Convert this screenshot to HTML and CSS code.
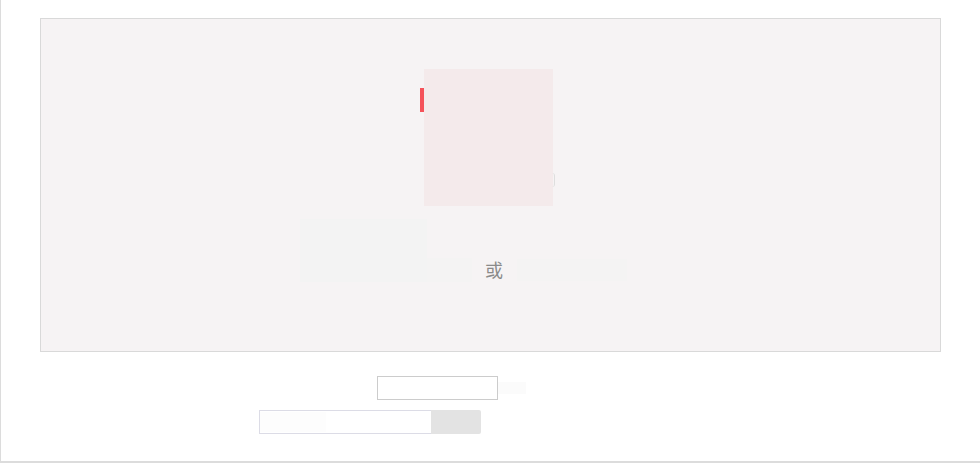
FILE: index.html
```html
<!DOCTYPE html>
<html lang="zh">
<head>
<meta charset="utf-8">
<link rel="stylesheet" href="styles.css">
<title>或</title>
</head>
<body>
<div class="frame">
  <div class="panel">
    <div class="card-row">
      <div class="marker"></div>
      <div class="card"><span class="arc"></span></div>
    </div>
    <div class="alt-row">
      <div class="qr-block"></div>
      <div class="mid-block"></div>
      <span class="or">或</span>
      <div class="right-block"></div>
    </div>
  </div>
  <div class="form">
    <div class="row-one">
      <div class="code-input"></div>
      <div class="code-tail"></div>
    </div>
    <div class="row-two">
      <div class="field"><span class="field-fill"></span></div>
      <div class="btn"></div>
    </div>
  </div>
</div>
</body>
</html>
```
FILE: styles.css
```css
html, body {
  margin: 0;
  padding: 0;
  background: #ffffff;
  font-family: "Noto Sans CJK SC", "Noto Sans", sans-serif;
}
.frame {
  width: 979px;
  height: 443px;
  border-left: 1px solid #dcdcdc;
  border-bottom: 2px solid #dcdcdc;
  padding-top: 18px;
  box-sizing: content-box;
}
.panel {
  margin-left: 39px;
  width: 899px;
  height: 332px;
  border: 1px solid #d9d9d9;
  background: #f6f3f4;
  display: flex;
  flex-direction: column;
}
.card-row {
  display: flex;
  align-items: flex-start;
  margin-left: 379px;
  margin-top: 50px;
}
.marker {
  width: 4px;
  height: 24px;
  margin-top: 19px;
  background: #f5525a;
}
.card {
  position: relative;
  width: 129px;
  height: 137px;
  background: #f4eaeb;
}
.arc {
  position: absolute;
  right: -2px;
  top: 104px;
  width: 2px;
  height: 14px;
  border-right: 1px solid #dedede;
  border-radius: 0 8px 8px 0;
}
.alt-row {
  display: flex;
  align-items: flex-end;
  margin-left: 259px;
  margin-top: 13px;
}
.qr-block {
  width: 127px;
  height: 63px;
  background: #f3f3f3;
}
.mid-block {
  width: 45px;
  height: 24px;
  background: #f4f3f3;
}
.or {
  display: block;
  width: 45px;
  height: 24px;
  line-height: 22px;
  padding-left: 13px;
  box-sizing: border-box;
  font-size: 18px;
  color: #8a8a8a;
}
.right-block {
  width: 110px;
  height: 22px;
  margin-bottom: 1px;
  background: #f4f3f3;
}
.form {
  display: flex;
  flex-direction: column;
}
.row-one {
  display: flex;
  align-items: center;
  margin-left: 376px;
  margin-top: 24px;
}
.code-input {
  width: 119px;
  height: 22px;
  border: 1px solid #cccccc;
  background: #ffffff;
}
.code-tail {
  width: 28px;
  height: 12px;
  background: #fbfbfb;
}
.row-two {
  display: flex;
  margin-left: 258px;
  margin-top: 10px;
}
.field {
  width: 171px;
  height: 22px;
  border: 1px solid #dcdce6;
  border-right: none;
  background: #ffffff;
  display: flex;
  align-items: center;
}
.field-fill {
  display: block;
  width: 66px;
  height: 20px;
  background: #fdfdfd;
}
.btn {
  width: 50px;
  height: 24px;
  background: #e3e3e3;
  border-radius: 0 2px 2px 0;
}
```
